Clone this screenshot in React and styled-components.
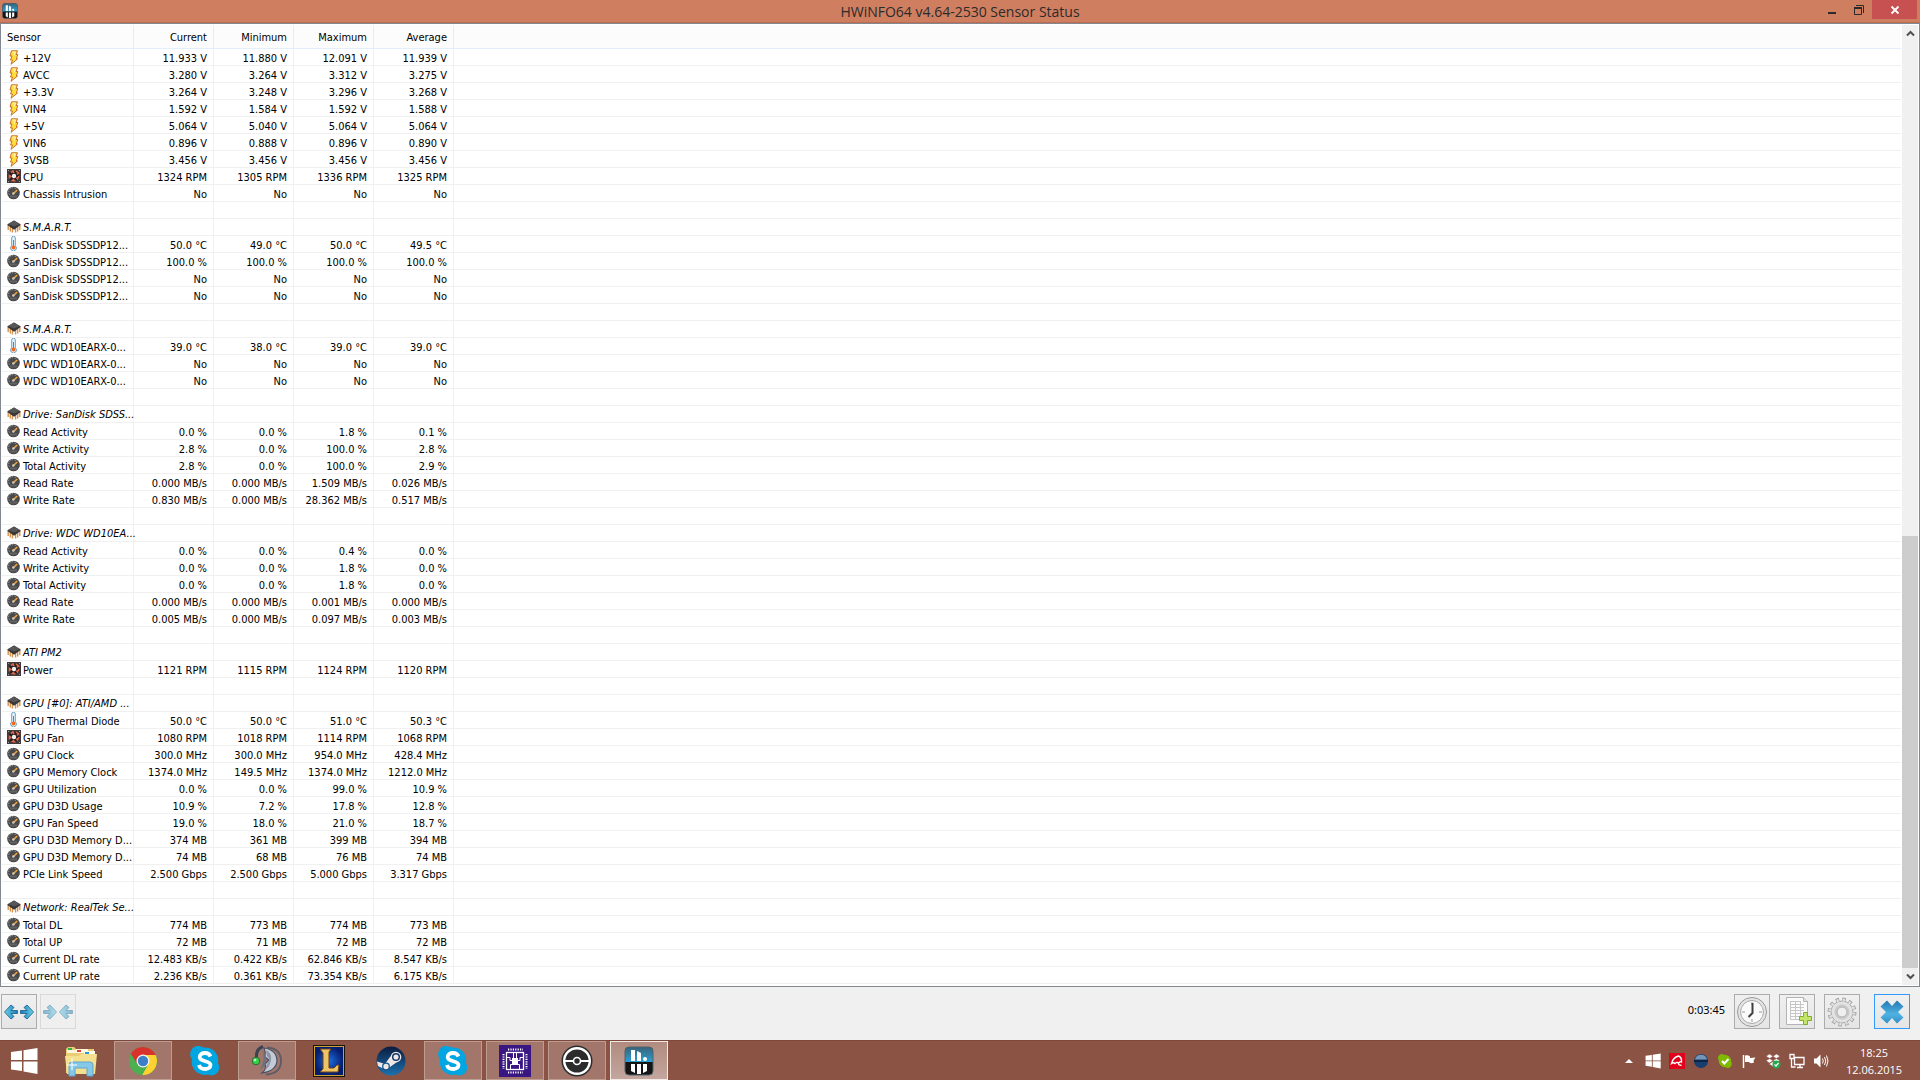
import * as React from "react"
import styled, { createGlobalStyle } from "styled-components"

const GlobalStyle = createGlobalStyle`
    * {
        box-sizing: border-box;
    }

    body {
        margin: 0;
        background: #f0f0f0;
        color: #000;
        font-family: "DejaVu Sans Condensed", "Noto Sans", sans-serif;
        font-size: 11px;
    }

    button {
        margin: 0;
        padding: 0;
        border: 0;
        background: none;
        color: inherit;
        font: inherit;
    }

    svg {
        display: block;
        flex-shrink: 0;
    }
`

const Desktop = styled.div`
    min-height: 100vh;
    display: flex;
    flex-direction: column;
`

/* title bar */

const TitleBar = styled.header`
    height: 23px;
    display: grid;
    grid-template-columns: 1fr auto 1fr;
    background: #d07e60;
    border-bottom: 1px solid #bb6d51;
`

const TitleIcon = styled.div`
    padding: 3px 2px;
`

const Title = styled.h1`
    margin: 0;
    padding-top: 2px;
    color: #2b2b2b;
    font-family: "Open Sans", "Noto Sans", sans-serif;
    font-size: 14px;
    font-weight: 400;
    line-height: 20px;
`

const WindowButtons = styled.div`
    display: flex;
    justify-content: flex-end;
    padding-right: 3px;
`

const WindowButton = styled.button`
    width: ${(props) => (props.$close ? 45 : 27)}px;
    height: 19px;
    display: flex;
    align-items: center;
    justify-content: center;
    background: ${(props) => (props.$close ? "#c75050" : "transparent")};
`

/* sensor list */

const Panel = styled.main`
    flex: 1;
    display: flex;
    background: #fff;
    border: 1px solid #828790;
    padding: 1px;
`

const TableArea = styled.div`
    flex: 1;
    min-width: 0;
    padding: 0 1px 1px 0;
`

const SensorTable = styled.table`
    width: 100%;
    table-layout: fixed;
    border-collapse: separate;
    border-spacing: 0;
`

const NameCol = styled.col`
    width: 132px;
`

const ValueCol = styled.col`
    width: 80px;
`

const HeadCell = styled.th`
    height: 24px;
    padding: 3px 6px 0 5px;
    background: #fcfcfc;
    border-right: 1px solid #e3eefc;
    border-bottom: 1px solid #e3eefc;
    font-weight: 400;
    line-height: 20px;
    text-align: ${(props) => (props.$name ? "left" : "right")};

    &:last-child {
        border-right: 0;
    }
`

const Cell = styled.td`
    height: 17px;
    padding: 3px 6px 0;
    border-right: 1px solid #f0f0f0;
    border-bottom: 1px solid #f0f0f0;
    line-height: 13px;
    text-align: right;
    white-space: nowrap;

    &:last-child {
        border-right: 0;
    }
`

const NameCell = styled(Cell)`
    padding: 0 0 0 5px;
    text-align: left;
`

const NameContent = styled.div`
    height: 16px;
    display: flex;
    align-items: flex-start;
    gap: 2px;
`

const SensorName = styled.span`
    padding-top: ${(props) => (props.$group ? 2 : 3)}px;
    font-style: ${(props) => (props.$group ? "italic" : "normal")};
`

const ScrollBar = styled.div`
    width: 16px;
    display: flex;
    flex-direction: column;
    background: #f0f0f0;
`

const ScrollButton = styled.button`
    height: 17px;
    display: flex;
    align-items: center;
    justify-content: center;
`

const ScrollTrack = styled.div`
    flex: 1;
    display: flex;
    flex-direction: column;
    justify-content: flex-end;
`

const ScrollThumb = styled.div`
    height: 46.7%;
    background: #cdcdcd;
`

/* toolbar */

const ToolBar = styled.div`
    height: 53px;
    display: flex;
    align-items: flex-start;
    gap: 9px;
    padding: 7px 10px 0 1px;
    background: #f0f0f0;
`

const ArrowGroup = styled.div`
    flex: 1;
    display: flex;
    gap: 3px;
`

const Elapsed = styled.span`
    line-height: 32px;
    font-family: "Noto Sans", sans-serif;
`

const ToolButton = styled.button`
    width: 36px;
    height: 35px;
    display: flex;
    align-items: center;
    justify-content: center;
    margin-left: ${(props) => (props.$exit ? 5 : 0)}px;
    border: 1px solid ${(props) => (props.$exit ? "#3399ff" : "#acacac")};
    background: linear-gradient(#f0f0f0, #e5e5e5);

    &:disabled {
        border-color: #d9d9d9;
        background: #efefef;
    }

    &:disabled svg {
        opacity: 0.5;
    }
`

/* taskbar */

const TaskBar = styled.footer`
    height: 40px;
    display: flex;
    gap: 4px;
    color: #fff;
    background: #8b5343;
    border-top: 1px solid #7b483a;
`

const TaskButton = styled.button`
    width: ${(props) => (props.$start ? 48 : 58)}px;
    height: 39px;
    display: flex;
    align-items: center;
    justify-content: center;
    border: 1px solid
        ${(props) =>
            props.$state === "active"
                ? "#f3eae7"
                : props.$state === "open"
                  ? "#bd9c92"
                  : "transparent"};
    background: ${(props) =>
        props.$state === "active"
            ? "linear-gradient(#b18b80, #c3a69d)"
            : props.$state === "open"
              ? "#a2766a"
              : "transparent"};
`

const Tray = styled.div`
    flex: 1;
    display: flex;
    align-items: center;
    justify-content: flex-end;
    gap: 8px;
    padding-right: 17px;
`

const TrayButton = styled.button`
    width: 16px;
    height: 16px;
`

const Clock = styled.time`
    width: 58px;
    margin-left: 8px;
    font-family: "Open Sans", "Noto Sans", sans-serif;
    line-height: 17px;
    text-align: center;
`

const AppIcon = ({ size }) => (
    <svg width={size} height={size} viewBox="0 0 30 30">
        <defs>
            <linearGradient id="appTop" x1="0" y1="0" x2="0" y2="1">
                <stop offset="0" stopColor="#3a6378" />
                <stop offset="1" stopColor="#2a9fd2" />
            </linearGradient>
        </defs>
        <rect x="1" y="1" width="28" height="28" rx="4" fill="#141414" />
        <path d="M1 16V5a4 4 0 0 1 4-4h20a4 4 0 0 1 4 4v11z" fill="url(#appTop)" />
        <rect x="1" y="1" width="28" height="28" rx="4" fill="none" stroke="#51626b" />
        <path d="M7 4h4v11H7zM13 5l4 2v8h-4zM7 18h4v9l-4-2zM13 18h4v10h-4zM19 18h4v7l-4 2z" fill="#fff" />
        <circle cx="21" cy="13" r="2" fill="#fff" />
    </svg>
)

const BoltIcon = () => (
    <svg width="14" height="16" viewBox="0 -1 14 16">
        <path d="M4.500.8h6L9 4.500h1.800L9.300 9h1.200L4 14.300 5.500 10h-2L5 6H3z" fill="#ffdf35" stroke="#c76d32" />
        <path d="M5.500 2h3L7 5.500" fill="none" stroke="#fff6c8" />
    </svg>
)

const FanIcon = () => (
    <svg width="14" height="15" viewBox="0 0 14 15">
        <rect y="1" width="14" height="14" fill="#3f393b" />
        <circle cx="7" cy="8" r="5.300" fill="#241c1d" />
        <path d="M4 4.500 6 3l1 2M9 3l2.500 2L10 6.500M12 8l-1.500 3L9.500 9.500M8.500 13 5.500 12.500 7 11M2.500 10.500V7.500L4.500 9" fill="none" stroke="#e0684b" strokeWidth="1.600" />
        <circle cx="7" cy="8" r="2.200" fill="#f4efee" />
        <path d="M1 2h1v1H1zM12 2h1v1h-1zM1 13h1v1H1zM12 13h1v1h-1z" fill="#9a9a9a" />
    </svg>
)

const GaugeIcon = () => (
    <svg width="14" height="15" viewBox="0 -1 14 15">
        <circle cx="6.500" cy="7" r="6.300" fill="#4a4a4a" />
        <path d="M2.500 8.500a4.300 4.300 0 0 1 7-5" fill="none" stroke="#a8a8a8" strokeDasharray="1.200 1.500" />
        <path d="M3 10.500h7" stroke="#626262" strokeWidth="2" />
        <path d="M6.500 7.500 10.200 4" stroke="#f2a43c" strokeWidth="1.600" />
        <circle cx="6.300" cy="7.500" r="1.300" fill="#c9c9c9" />
    </svg>
)

const ThermometerIcon = () => (
    <svg width="14" height="15" viewBox="0 0 14 15">
        <path d="M4.700 2a1.800 1.800 0 0 1 3.600 0v7.800a2.900 2.900 0 1 1-3.600 0z" fill="#e6f3fa" stroke="#6b9fc0" />
        <path d="M6.500 4v7" stroke="#c7654a" />
        <circle cx="6.500" cy="11.500" r="1.900" fill="#f06a1c" />
    </svg>
)

const ChipIcon = () => (
    <svg width="14" height="14" viewBox="0 0 14 14">
        <path d="M1.200 6v5M3.300 7.500v5M5.400 8.500v5M8.600 8.500v5M10.700 7.500v5M12.800 6v5" stroke="#d4924e" strokeWidth="1.400" />
        <path d="m7 1.500 7 4.300-7 5-7-5z" fill="#373737" />
        <path d="m7 1.500 6 3.500-6 2.500L1 5z" fill="#565656" />
    </svg>
)

const icons = {
    bolt: BoltIcon,
    fan: FanIcon,
    gauge: GaugeIcon,
    temp: ThermometerIcon,
    chip: ChipIcon,
}

const Arrow = () => (
    <path d="M1.500 9 8 2l3 2.500L8 7.500h6.500v3H8l3 3L8 16z" fill="url(#arrowBlue)" stroke="#22688f" strokeWidth="0.900" />
)

const SpreadIcon = ({ inward }) => (
    <svg width="32" height="18" viewBox="0 0 32 18">
        <defs>
            <linearGradient id="arrowBlue">
                <stop offset="0" stopColor="#69d3e6" />
                <stop offset="1" stopColor="#1a79bd" />
            </linearGradient>
        </defs>
        <g transform={inward ? "translate(16 0) scale(-1 1)" : undefined}>
            <Arrow />
        </g>
        <g transform={inward ? "translate(16 0)" : "translate(32 0) scale(-1 1)"}>
            <Arrow />
        </g>
    </svg>
)

const ClockIcon = () => (
    <svg width="32" height="32" viewBox="0 0 32 32">
        <circle cx="16" cy="16" r="14.500" fill="#e6e6e6" stroke="#989898" />
        <circle cx="16" cy="16" r="11.500" fill="#fafafa" stroke="#a6a6a6" />
        <path d="M16 6v3M16 23v3M6 16h3M23 16h3" stroke="#9a9a9a" />
        <path d="M16.500 7v10l-4 4" fill="none" stroke="#3e3e3e" strokeWidth="2" />
    </svg>
)

const LogIcon = () => (
    <svg width="32" height="32" viewBox="0 0 32 32">
        <path d="M5.500 1.500h17l4 4v23h-21z" fill="#fbfbfb" stroke="#b3b3b3" />
        <path d="M22.500 1.500v4h4" fill="#e2e2e2" stroke="#b3b3b3" />
        <path d="M9 5.500h11M9 8.500h14M9 11.500h14M9 14.500h14M9 17.500h12M9 20.500h11M9 23.500h10M9.500 5v19M14.500 5v19M19.500 5v19" stroke="#c6c6c6" />
        <path d="M22.500 16.500h4v4h4v4h-4v4h-4v-4h-4v-4h4z" fill="#c3e36a" stroke="#7fae2a" />
    </svg>
)

const GearIcon = () => (
    <svg width="32" height="32" viewBox="0 0 32 32">
        <circle cx="16" cy="16" r="12.500" fill="none" stroke="#a4a4a4" strokeWidth="4" strokeDasharray="3.400 3.140" />
        <circle cx="16" cy="16" r="11" fill="#e2e2e2" stroke="#a9a9a9" />
        <circle cx="16" cy="16" r="12" fill="none" stroke="#e2e2e2" strokeWidth="3" strokeDasharray="2 4.280" strokeDashoffset="-0.600" />
        <circle cx="16" cy="16" r="7.500" fill="#cacaca" />
        <circle cx="16" cy="16" r="5" fill="#efefef" stroke="#b0b0b0" />
    </svg>
)

const ExitIcon = () => (
    <svg width="26" height="26" viewBox="0 0 26 26">
        <defs>
            <linearGradient id="exitBlue" x1="0" y1="0" x2="0" y2="1">
                <stop offset="0" stopColor="#2379b4" />
                <stop offset="0.600" stopColor="#4fb2e3" />
                <stop offset="1" stopColor="#2f8dc6" />
            </linearGradient>
        </defs>
        <path d="M8 1.500 13 7l5-5.500 6.500 6L19 13l5.500 5.500-6.500 6-5-5.500-5 5.500-6.500-6L7 13 1.500 7.500z" fill="url(#exitBlue)" />
    </svg>
)

const WindowsIcon = ({ size }) => (
    <svg width={size} height={size} viewBox="0 0 28 28">
        <path d="M1 5 12 3.500V13H1zM13.500 3.200 27.500 1v12h-14zM1 14.500h11V24L1 22.500zM13.500 14.500h14V27l-14-2.500z" fill="#fff" />
    </svg>
)

const ExplorerIcon = () => (
    <svg width="34" height="32" viewBox="0 0 34 32">
        <path d="M2 4l2-2h6l2 2h18v24H2z" fill="#e9cd77" />
        <path d="M3 5h13v3H3z" fill="#fdf6da" />
        <path d="M4 3h4v2H4z" fill="#2db54a" />
        <path d="M12 4h12v4H12z" fill="#fff8e2" />
        <path d="M13 5h4v2h-4z" fill="#d6452f" />
        <path d="M20 6h11v3H20z" fill="#fffbe9" />
        <path d="M21 7h4v2h-4z" fill="#3199d8" />
        <path d="M1 11h14l2-2h16l-2 20H3z" fill="#f5e08f" />
        <path d="M5 31V20q0-3 3-3h18q3 0 3 3v11h-6v-8H11v8z" fill="#86c8e8" stroke="#5ea6cf" />
        <path d="M8 13v12M3 20h10" stroke="#fff" />
    </svg>
)

const ChromeIcon = () => (
    <svg width="30" height="30" viewBox="0 0 30 30">
        <circle cx="15" cy="15" r="14" fill="#4caf50" />
        <path d="M15 9h12.600A14 14 0 0 1 14 29l6-10z" fill="#fdd130" />
        <path d="M2.880 8A14 14 0 0 1 27.600 9H15L9.500 18z" fill="#d9322c" />
        <path d="M2.880 8 9.500 19.500l5.500 1.500 4-1-5 9A14 14 0 0 1 2.880 8z" fill="#4caf50" />
        <circle cx="15" cy="15" r="6.500" fill="#f5f5f5" />
        <circle cx="15" cy="15" r="5.200" fill="#3c7fc6" />
    </svg>
)

const SkypeIcon = () => (
    <svg width="30" height="32" viewBox="0 0 30 32">
        <path d="M8.500 1q3 0 5 1.500A13 13 0 0 1 28 18q1.500 2.500 1 6a7.500 7.500 0 0 1-11 5.500A13 13 0 0 1 2 14 8 8 0 0 1 8.500 1z" fill="#00a6e2" />
        <path d="M20.500 11.500C19.500 8.800 17.500 8 15 8c-3 0-5.300 1.500-5.300 4 0 5.500 10.800 3 10.800 8 0 2.500-2.500 4-5.500 4-3 0-5.300-1.300-6-4" fill="none" stroke="#fff" strokeWidth="3.800" />
    </svg>
)

const TeamSpeakIcon = () => (
    <svg width="34" height="34" viewBox="0 0 34 34">
        <path d="M17 3.500q14 1 14 13.500T16 30.500" fill="none" stroke="#5c5c66" strokeWidth="1.800" />
        <path d="M14 4q13 2 13 13-1 10-15 12 5-4 3-9l4-4-4-3q1-5-1-9z" fill="#c3cbd8" stroke="#4a5060" strokeWidth="1.200" />
        <path d="M16 6q6 3 5 10t-6 10l2-6 3-4-3-4z" fill="#8e96a6" />
        <path d="M13 2.500Q5.500 5 6.500 14" fill="none" stroke="#3b4252" strokeWidth="3" />
        <path d="M12 5q4 9-2 21 8-6 6-13z" fill="#6b7180" />
        <circle cx="6" cy="17" r="3.800" fill="#36d14a" stroke="#276b30" />
        <circle cx="5" cy="16" r="1.300" fill="#b9f7bd" />
    </svg>
)

const LeagueIcon = () => (
    <svg width="32" height="32" viewBox="0 0 32 32">
        <defs>
            <radialGradient id="leagueBlue">
                <stop offset="0" stopColor="#1b6de0" />
                <stop offset="1" stopColor="#051b6b" />
            </radialGradient>
        </defs>
        <rect width="32" height="32" fill="#191308" />
        <rect x="1.500" y="1.500" width="29" height="29" fill="url(#leagueBlue)" stroke="#c9a23f" />
        <path d="M7 4h11l-2 3v16h5l3-3h2l-1 7H7l3-3V8z" fill="#efc468" stroke="#6e4312" />
    </svg>
)

const SteamIcon = () => (
    <svg width="30" height="30" viewBox="0 0 30 30">
        <defs>
            <linearGradient id="steamBlue" x1="0" y1="0" x2="0" y2="1">
                <stop offset="0" stopColor="#0b1c3f" />
                <stop offset="1" stopColor="#1c71ae" />
            </linearGradient>
        </defs>
        <circle cx="15" cy="15" r="14.500" fill="url(#steamBlue)" />
        <path d="M1 15.500 9 18l5-7 6-5 5 5-4 5-7 5-4 3-8-4z" fill="#f1e8e6" />
        <circle cx="20" cy="11" r="5.300" fill="#f1e8e6" />
        <circle cx="20" cy="11" r="3.300" fill="#f1e8e6" stroke="#14396b" strokeWidth="1.500" />
        <circle cx="10" cy="20.500" r="3.300" fill="#f1e8e6" stroke="#14558e" strokeWidth="1.300" />
    </svg>
)

const CpuIcon = () => (
    <svg width="32" height="32" viewBox="0 0 32 32">
        <rect width="32" height="32" fill="#391682" />
        <path d="M9 4.500h15M9 27.500h15" stroke="#fff" strokeWidth="2" strokeDasharray="1.200 1.200" />
        <path d="M4.500 9v15M27.500 9v15" stroke="#fff" strokeWidth="2" strokeDasharray="1.200 1.200" />
        <rect x="7.500" y="7.500" width="17" height="17" fill="none" stroke="#fff" strokeWidth="1.300" />
        <rect x="13" y="13" width="6" height="6" fill="#fff" />
        <path d="M8 12.500h3v3h2M24 12.500h-3v3h-2M11.500 24v-4.500h9V24M14.500 8v5M17.500 8v5" fill="none" stroke="#fff" />
    </svg>
)

const BallIcon = () => (
    <svg width="32" height="32" viewBox="0 0 32 32">
        <circle cx="16" cy="16" r="15.500" fill="#2c2c2c" />
        <circle cx="16" cy="16" r="12.800" fill="none" stroke="#fff" strokeWidth="2.400" />
        <path d="M3 16h26" stroke="#fff" strokeWidth="2" />
        <circle cx="16" cy="16" r="3.500" fill="#2c2c2c" stroke="#fff" strokeWidth="1.600" />
    </svg>
)

const TrayAvira = () => (
    <svg width="16" height="16" viewBox="0 0 16 16">
        <rect width="16" height="16" fill="#e2001a" />
        <path d="M2.500 10.500Q4 4.500 9.500 3q3.500 1.500 3 6-1.500-1-3 1-1.500-1.500-3.500.5-1.500-1.500-3.500 0zM9 9.500q.5 3 3.500 3" fill="none" stroke="#fff" strokeWidth="1.400" />
    </svg>
)

const TraySphere = () => (
    <svg width="16" height="16" viewBox="0 0 16 16">
        <circle cx="8" cy="8" r="7" fill="#173e6e" />
        <path d="M2 6.500a6.200 6.200 0 0 1 12 0z" fill="#7595b8" />
        <path d="M1 7h14v2H1z" fill="#0d2345" />
    </svg>
)

const TraySkype = () => (
    <svg width="16" height="16" viewBox="0 0 16 16">
        <path d="M4.500 1q1.500 0 2.500.8 7 0 7.300 7.200.9 1.500.2 3.500a4 4 0 0 1-5.500 2Q2 14 1.600 7A4 4 0 0 1 4.500 1z" fill="#7fba00" />
        <path d="m5 8 2.300 2.500L11.500 6" fill="none" stroke="#fff" strokeWidth="2" />
    </svg>
)

const TrayFlag = () => (
    <svg width="16" height="16" viewBox="0 0 16 16">
        <path d="M2.500 2v13" stroke="#fff" strokeWidth="1.500" />
        <path d="M4 2.500q3-1 5 1V5l5.500-.5-2 3 .5 2Q9 11 8 9H4z" fill="#fff" />
    </svg>
)

const TrayDropbox = () => (
    <svg width="16" height="16" viewBox="0 0 16 16">
        <path d="m4.500 1 3.500 2.300L4.700 5.500 1 3.200zM11.500 1 8 3.300l3.300 2.200L15 3.200zM1 7.700l3.700-2.200L8 7.700 4.500 10zM15 7.700l-3.700-2.200L8 7.700l3.500 2.300zM4 11l4-2.500 4 2.500-4 2.500z" fill="#fff" stroke="#8b5343" strokeWidth="0.500" />
        <circle cx="11.500" cy="11.500" r="4" fill="#25a94d" />
        <path d="m9.500 11.500 1.500 1.500 2.500-3" fill="none" stroke="#fff" strokeWidth="1.200" />
    </svg>
)

const TrayNetwork = () => (
    <svg width="16" height="16" viewBox="0 0 16 16">
        <path d="M5.500 4.500H15v7H5.500zM8 14.500h6M11 12v2M2.500 6v8h4" fill="none" stroke="#fff" strokeWidth="1.300" />
        <path d="M1 1.500h4v4H1z" fill="#8b5343" stroke="#fff" strokeWidth="1.300" />
    </svg>
)

const TraySound = () => (
    <svg width="16" height="16" viewBox="0 0 16 16">
        <path d="M1 5.500h2.500l4-4v13l-4-4H1z" fill="#fff" />
        <path d="M9.500 5.500q1.500 2.500 0 5M11.500 4q2.500 4 0 8M13.500 2.500q3 5.500 0 11" fill="none" stroke="#fff" />
    </svg>
)

const TrayArrow = () => (
    <svg width="16" height="16" viewBox="0 0 16 16">
        <path d="m4 10 4-4 4 4z" fill="#fff" />
    </svg>
)

const columns = ["Current", "Minimum", "Maximum", "Average"]

const rows = [
    ["bolt", "+12V", "11.933 V", "11.880 V", "12.091 V", "11.939 V"],
    ["bolt", "AVCC", "3.280 V", "3.264 V", "3.312 V", "3.275 V"],
    ["bolt", "+3.3V", "3.264 V", "3.248 V", "3.296 V", "3.268 V"],
    ["bolt", "VIN4", "1.592 V", "1.584 V", "1.592 V", "1.588 V"],
    ["bolt", "+5V", "5.064 V", "5.040 V", "5.064 V", "5.064 V"],
    ["bolt", "VIN6", "0.896 V", "0.888 V", "0.896 V", "0.890 V"],
    ["bolt", "3VSB", "3.456 V", "3.456 V", "3.456 V", "3.456 V"],
    ["fan", "CPU", "1324 RPM", "1305 RPM", "1336 RPM", "1325 RPM"],
    ["gauge", "Chassis Intrusion", "No", "No", "No", "No"],
    [],
    ["chip", "S.M.A.R.T."],
    ["temp", "SanDisk SDSSDP12...", "50.0 °C", "49.0 °C", "50.0 °C", "49.5 °C"],
    ["gauge", "SanDisk SDSSDP12...", "100.0 %", "100.0 %", "100.0 %", "100.0 %"],
    ["gauge", "SanDisk SDSSDP12...", "No", "No", "No", "No"],
    ["gauge", "SanDisk SDSSDP12...", "No", "No", "No", "No"],
    [],
    ["chip", "S.M.A.R.T."],
    ["temp", "WDC WD10EARX-0...", "39.0 °C", "38.0 °C", "39.0 °C", "39.0 °C"],
    ["gauge", "WDC WD10EARX-0...", "No", "No", "No", "No"],
    ["gauge", "WDC WD10EARX-0...", "No", "No", "No", "No"],
    [],
    ["chip", "Drive: SanDisk SDSS..."],
    ["gauge", "Read Activity", "0.0 %", "0.0 %", "1.8 %", "0.1 %"],
    ["gauge", "Write Activity", "2.8 %", "0.0 %", "100.0 %", "2.8 %"],
    ["gauge", "Total Activity", "2.8 %", "0.0 %", "100.0 %", "2.9 %"],
    ["gauge", "Read Rate", "0.000 MB/s", "0.000 MB/s", "1.509 MB/s", "0.026 MB/s"],
    ["gauge", "Write Rate", "0.830 MB/s", "0.000 MB/s", "28.362 MB/s", "0.517 MB/s"],
    [],
    ["chip", "Drive: WDC WD10EA..."],
    ["gauge", "Read Activity", "0.0 %", "0.0 %", "0.4 %", "0.0 %"],
    ["gauge", "Write Activity", "0.0 %", "0.0 %", "1.8 %", "0.0 %"],
    ["gauge", "Total Activity", "0.0 %", "0.0 %", "1.8 %", "0.0 %"],
    ["gauge", "Read Rate", "0.000 MB/s", "0.000 MB/s", "0.001 MB/s", "0.000 MB/s"],
    ["gauge", "Write Rate", "0.005 MB/s", "0.000 MB/s", "0.097 MB/s", "0.003 MB/s"],
    [],
    ["chip", "ATI PM2"],
    ["fan", "Power", "1121 RPM", "1115 RPM", "1124 RPM", "1120 RPM"],
    [],
    ["chip", "GPU [#0]: ATI/AMD ..."],
    ["temp", "GPU Thermal Diode", "50.0 °C", "50.0 °C", "51.0 °C", "50.3 °C"],
    ["fan", "GPU Fan", "1080 RPM", "1018 RPM", "1114 RPM", "1068 RPM"],
    ["gauge", "GPU Clock", "300.0 MHz", "300.0 MHz", "954.0 MHz", "428.4 MHz"],
    ["gauge", "GPU Memory Clock", "1374.0 MHz", "149.5 MHz", "1374.0 MHz", "1212.0 MHz"],
    ["gauge", "GPU Utilization", "0.0 %", "0.0 %", "99.0 %", "10.9 %"],
    ["gauge", "GPU D3D Usage", "10.9 %", "7.2 %", "17.8 %", "12.8 %"],
    ["gauge", "GPU Fan Speed", "19.0 %", "18.0 %", "21.0 %", "18.7 %"],
    ["gauge", "GPU D3D Memory D...", "374 MB", "361 MB", "399 MB", "394 MB"],
    ["gauge", "GPU D3D Memory D...", "74 MB", "68 MB", "76 MB", "74 MB"],
    ["gauge", "PCIe Link Speed", "2.500 Gbps", "2.500 Gbps", "5.000 Gbps", "3.317 Gbps"],
    [],
    ["chip", "Network: RealTek Se..."],
    ["gauge", "Total DL", "774 MB", "773 MB", "774 MB", "773 MB"],
    ["gauge", "Total UP", "72 MB", "71 MB", "72 MB", "72 MB"],
    ["gauge", "Current DL rate", "12.483 KB/s", "0.422 KB/s", "62.846 KB/s", "8.547 KB/s"],
    ["gauge", "Current UP rate", "2.236 KB/s", "0.361 KB/s", "73.354 KB/s", "6.175 KB/s"],
]

const tasks = [
    { label: "File Explorer", icon: <ExplorerIcon /> },
    { label: "Chrome", icon: <ChromeIcon />, state: "open" },
    { label: "Skype", icon: <SkypeIcon /> },
    { label: "TeamSpeak", icon: <TeamSpeakIcon />, state: "open" },
    { label: "League of Legends", icon: <LeagueIcon /> },
    { label: "Steam", icon: <SteamIcon /> },
    { label: "Skype Desktop", icon: <SkypeIcon />, state: "open" },
    { label: "CPU-Z", icon: <CpuIcon />, state: "open" },
    { label: "Launcher", icon: <BallIcon />, state: "open" },
    { label: "HWiNFO64", icon: <AppIcon size={30} />, state: "active" },
]

const trayItems = [
    { label: "Show hidden icons", icon: <TrayArrow /> },
    { label: "Windows", icon: <WindowsIcon size={16} /> },
    { label: "Avira", icon: <TrayAvira /> },
    { label: "Daemon", icon: <TraySphere /> },
    { label: "Skype status", icon: <TraySkype /> },
    { label: "Action Center", icon: <TrayFlag /> },
    { label: "Dropbox", icon: <TrayDropbox /> },
    { label: "Network", icon: <TrayNetwork /> },
    { label: "Volume", icon: <TraySound /> },
]

const SensorRow = ({ row }) => {
    const [icon, name, ...values] = row
    const Icon = icons[icon]

    return (
        <tr>
            <NameCell>
                <NameContent>
                    {Icon && <Icon />}
                    {name && <SensorName $group={icon === "chip"}>{name}</SensorName>}
                </NameContent>
            </NameCell>
            {columns.map((column, i) => (
                <Cell key={column}>{values[i]}</Cell>
            ))}
            <Cell />
        </tr>
    )
}

const App = () => {
    return (
        <Desktop>
            <GlobalStyle />
            <TitleBar>
                <TitleIcon>
                    <AppIcon size={16} />
                </TitleIcon>
                <Title>HWiNFO64 v4.64-2530 Sensor Status</Title>
                <WindowButtons>
                    <WindowButton aria-label="Minimize">
                        <svg width="12" height="12" viewBox="0 0 12 12">
                            <path d="M2 8h8v2H2z" fill="#2b2b2b" />
                        </svg>
                    </WindowButton>
                    <WindowButton aria-label="Restore">
                        <svg width="12" height="12" viewBox="0 0 12 12">
                            <path d="M1.500 3.500h7v7h-7zM3 1.500h7.500V9" fill="none" stroke="#2b2b2b" />
                            <path d="M1 3h8v2H1z" fill="#2b2b2b" />
                        </svg>
                    </WindowButton>
                    <WindowButton $close aria-label="Close">
                        <svg width="10" height="10" viewBox="0 0 10 10">
                            <path d="m1.500 1.500 7 7m0-7-7 7" stroke="#fff" strokeWidth="1.800" />
                        </svg>
                    </WindowButton>
                </WindowButtons>
            </TitleBar>

            <Panel>
                <TableArea>
                    <SensorTable>
                        <colgroup>
                            <NameCol />
                            {columns.map((column) => (
                                <ValueCol key={column} />
                            ))}
                            <col />
                        </colgroup>
                        <thead>
                            <tr>
                                <HeadCell $name>Sensor</HeadCell>
                                {columns.map((column) => (
                                    <HeadCell key={column}>{column}</HeadCell>
                                ))}
                                <HeadCell />
                            </tr>
                        </thead>
                        <tbody>
                            {rows.map((row, i) => (
                                <SensorRow key={i} row={row} />
                            ))}
                        </tbody>
                    </SensorTable>
                </TableArea>
                <ScrollBar>
                    <ScrollButton aria-label="Scroll up">
                        <svg width="9" height="7" viewBox="0 0 9 7">
                            <path d="m1 5.500 3.500-3.500L8 5.500" fill="none" stroke="#505050" strokeWidth="2" />
                        </svg>
                    </ScrollButton>
                    <ScrollTrack>
                        <ScrollThumb />
                    </ScrollTrack>
                    <ScrollButton aria-label="Scroll down">
                        <svg width="9" height="7" viewBox="0 0 9 7">
                            <path d="M1 1.500 4.500 5 8 1.500" fill="none" stroke="#505050" strokeWidth="2" />
                        </svg>
                    </ScrollButton>
                </ScrollBar>
            </Panel>

            <ToolBar>
                <ArrowGroup>
                    <ToolButton aria-label="Expand columns">
                        <SpreadIcon />
                    </ToolButton>
                    <ToolButton disabled aria-label="Shrink columns">
                        <SpreadIcon inward />
                    </ToolButton>
                </ArrowGroup>
                <Elapsed>0:03:45</Elapsed>
                <ToolButton aria-label="Reset clock">
                    <ClockIcon />
                </ToolButton>
                <ToolButton aria-label="Start logging">
                    <LogIcon />
                </ToolButton>
                <ToolButton aria-label="Settings">
                    <GearIcon />
                </ToolButton>
                <ToolButton $exit aria-label="Close sensors">
                    <ExitIcon />
                </ToolButton>
            </ToolBar>

            <TaskBar>
                <TaskButton $start aria-label="Start">
                    <WindowsIcon size={28} />
                </TaskButton>
                {tasks.map((task) => (
                    <TaskButton key={task.label} $state={task.state} aria-label={task.label}>
                        {task.icon}
                    </TaskButton>
                ))}
                <Tray>
                    {trayItems.map((item) => (
                        <TrayButton key={item.label} aria-label={item.label}>
                            {item.icon}
                        </TrayButton>
                    ))}
                    <Clock>
                        18:25
                        <br />
                        12.06.2015
                    </Clock>
                </Tray>
            </TaskBar>
        </Desktop>
    )
}

export default App
